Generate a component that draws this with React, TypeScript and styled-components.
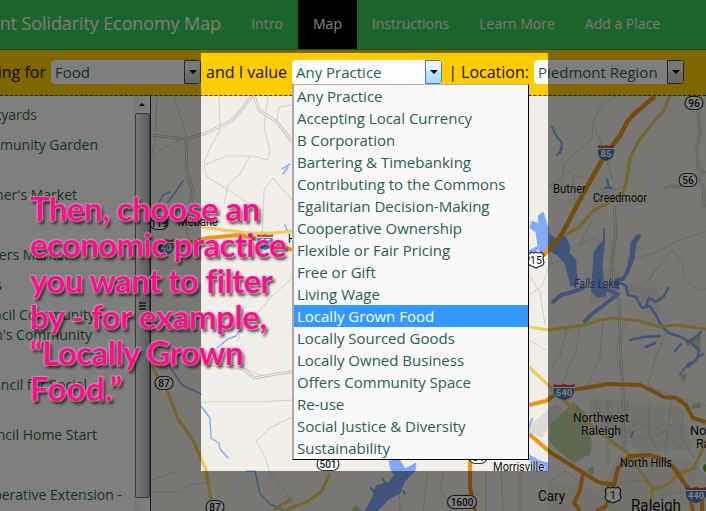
import React from 'react';
import styled, { createGlobalStyle } from 'styled-components';

const GlobalStyle = createGlobalStyle`
  *, *::before, *::after { box-sizing: border-box; }
  html, body { margin: 0; padding: 0; }
  body { font-family: "Open Sans", sans-serif; overflow: hidden; }
`;

const Page = styled.div`
  position: relative;
  display: flex;
  flex-direction: column;
  width: 706px;
  height: 511px;
  overflow: hidden;
  background: #fff;
`;

const NavBar = styled.nav`
  display: flex;
  flex: none;
  height: 50px;
  background: #36ca56;
  border-bottom: 1px solid #2ba545;
`;

const Brand = styled.div`
  display: flex;
  justify-content: flex-end;
  width: 236px;
  padding-right: 15px;
  font-size: 18px;
  line-height: 47px;
  letter-spacing: -0.1px;
  white-space: nowrap;
  color: #fffaf0;
`;

const NavLink = styled.a<{ $width: number; $active?: boolean }>`
  width: ${(p) => p.$width}px;
  flex: none;
  text-align: center;
  font-size: 14px;
  line-height: 47px;
  white-space: nowrap;
  color: ${(p) => (p.$active ? '#fff' : '#f6eee6')};
  background: ${(p) => (p.$active ? '#000' : 'transparent')};
`;

const FilterBar = styled.div`
  display: flex;
  flex: none;
  align-items: flex-start;
  height: 46px;
  padding-top: 10px;
  background: #fc0;
  border-bottom: 1px dashed #333;
`;

const FilterLabel = styled.span<{ $width: number }>`
  display: flex;
  justify-content: flex-end;
  flex: none;
  width: ${(p) => p.$width}px;
  padding-right: 5px;
  font-size: 16px;
  line-height: 24px;
  white-space: nowrap;
  color: #111;
`;

const Select = styled.div`
  display: flex;
  flex: none;
  justify-content: space-between;
  width: 150px;
  height: 24px;
  padding-left: 4px;
  overflow: hidden;
  border-radius: 4px;
  background: #fdfdfd;
  color: #2a5f5a;
  font-size: 15px;
  line-height: 24px;
  white-space: nowrap;
`;

const SelectButton = styled.span<{ $open?: boolean }>`
  display: flex;
  flex: none;
  align-items: center;
  justify-content: center;
  width: 17px;
  height: 24px;
  border: 1px solid ${(p) => (p.$open ? '#3c7fb1' : '#4a4a4a')};
  border-radius: 0 2px 2px 0;
  background: ${(p) =>
    p.$open
      ? 'linear-gradient(#e9f6fd 45%, #bee6fd 50%, #a7d9f5)'
      : 'linear-gradient(#f2f2f2 45%, #ddd 50%, #cfcfcf)'};
`;

const Arrow = styled.i<{ $size: number; $up?: boolean }>`
  border: ${(p) => p.$size}px solid transparent;
  ${(p) => (p.$up ? 'border-top-width: 0; border-bottom-color: #000;' : 'border-bottom-width: 0; border-top-color: #000;')}
`;

const Body = styled.div`
  display: flex;
  flex: 1;
  min-height: 0;
`;

const Sidebar = styled.aside`
  display: flex;
  flex: none;
  width: 151px;
  overflow: hidden;
  border-right: 1px solid #333;
  background: #fff;
`;

const PlaceList = styled.div`
  width: 134px;
  padding-top: 9px;
  overflow: hidden;
`;

const Place = styled.div<{ $end: number; $gap?: number }>`
  display: flex;
  justify-content: flex-end;
  width: ${(p) => p.$end}px;
  margin-top: ${(p) => p.$gap ?? 0}px;
  height: 20px;
  font-size: 14px;
  line-height: 20px;
  white-space: nowrap;
  color: #2a6d3a;
`;

const Scrollbar = styled.div`
  display: flex;
  flex-direction: column;
  align-items: center;
  width: 16px;
  height: 100%;
  background: linear-gradient(90deg, #eee, #fff);
`;

const ScrollUp = styled.div`
  display: flex;
  align-items: center;
  height: 17px;
`;

const Thumb = styled.div`
  display: flex;
  flex-direction: column;
  align-items: center;
  justify-content: center;
  gap: 1px;
  width: 15px;
  height: 385px;
  flex: none;
  border: 1px solid #777;
  border-radius: 2px;
  background: linear-gradient(90deg, #f2f2f2, #d2d2d8 55%, #b4b4be);
`;

const Grip = styled.span`
  width: 7px;
  height: 2px;
  background: #555;
`;

const MapCanvas = styled.svg`
  display: block;
  flex: none;
  width: 555px;
  height: 415px;
`;

const Options = styled.div`
  position: absolute;
  left: 292px;
  top: 84px;
  width: 237px;
  height: 376px;
  border: solid #000;
  border-width: 1px 1px 1px 2px;
  border-color: #b0b0b0 #000 #000 #aaa;
  background: #f8f8f8;
`;

const Option = styled.div<{ $selected?: boolean }>`
  height: 22px;
  padding-left: 3px;
  font-size: 15px;
  line-height: 22px;
  white-space: nowrap;
  color: ${(p) => (p.$selected ? '#fff' : '#2a5f55')};
  background: ${(p) => (p.$selected ? '#39f' : 'transparent')};
`;

const Spotlight = styled.div`
  position: absolute;
  left: 201px;
  top: 53px;
  width: 347px;
  height: 418px;
  box-shadow: 0 0 0 800px rgba(0, 0, 0, 0.5);
`;

const Caption = styled.div`
  position: absolute;
  left: 30px;
  top: 190px;
  font-family: Lato, sans-serif;
  font-weight: 700;
  font-size: 33px;
  line-height: 36px;
  white-space: nowrap;
  color: #f0148c;
  text-shadow: 0 0 2px #ffb6cf, 0 0 2px #ffb6cf, 2px 3px 3px rgba(0, 0, 0, 0.75);
`;

const CaptionLine = styled.div<{ $track: number }>`
  letter-spacing: ${(p) => p.$track}px;
`;

const MinorRoads = () => (
  <g fill="none" stroke="#d2cfc8" strokeWidth="1">
    <path d="M151 350L170 356 201 362M151 492L180 492 192 484 208 483M201 402L262 402 292 400M292 417L270 428 256 441 265 457 270 473 282 488 292 500" />
    <path d="M157 96L155 140 151 157M174 96L187 137 186 170 191 195 184 218 190 245M204 165L226 156 254 156 268 160 270 150 264 128 268 96" />
    <path d="M292 200L273 178 264 190 262 246M204 165L207 177 225 188 247 202 263 211M249 157L240 174 228 185 224 204M219 96L220 130 211 146 204 163" />
    <path d="M292 278L270 298 258 313 246 312 238 340M201 365L246 369 265 377 292 370M292 105L279 107 277 120M187 137L166 146 151 157" />
    <path d="M548 186L564 177 562 165 592 139 593 122 602 105 616 96M593 122L603 149 613 180M592 209L604 192 625 187M563 165L573 175 575 211M575 175L588 179 614 199" />
    <path d="M592 220L579 246 590 238 602 242M640 257L660 251 675 242 706 231M646 282L665 259 673 250 683 264 684 278 698 290 706 289M655 268L650 280M529 275L540 292 545 325M567 329L560 355 550 370M580 326L576 350 562 385M603 323L600 357 587 386M628 320L616 350 624 385M666 333L655 359 648 385 662 392 706 406" />
    <path d="M529 222L548 226 556 250M529 295L542 286 550 264 568 258 580 263M529 340L546 350M595 400L606 422 626 433 638 422 654 431 665 423 684 430M603 445L621 429 646 440 666 431 680 449M608 400L608 467M630 394L622 423 629 455M650 398L648 432 663 461M671 402L665 452 684 477M548 483L565 471 580 482M625 482L650 480 662 495 683 492M694 458L681 437 683 411" />
    <path d="M399 471L400 511M428 471L423 511M444 471L440 489 454 511M486 471L486 511M501 471L503 511M520 471L520 511M151 480L177 471" />
  </g>
);

const WhiteRoads = () => (
  <>
    {['#c4c1ba', '#f4f2ed'].map((color, i) => (
      <g key={color} fill="none" stroke={color} strokeWidth={i ? 1.2 : 3} strokeLinejoin="round">
        <path d="M151 135L186 139 204 134 233 120 252 96M254 96L259 110 277 122 292 142M186 138L187 170 193 190 190 216" />
        <path d="M614 205L616 232 612 260 611 285 619 300 620 340 623 390 624 450" />
        <path d="M692 96L698 112 700 131 697 150 698 168 706 174M698 175L704 190 703 206 706 206M664 188L672 186 682 187" />
        <path d="M226 365L243 369 254 378 276 374 292 372" />
      </g>
    ))}
  </>
);

const Water = () => (
  <g stroke="#83abf5" fill="none" strokeLinejoin="round" strokeLinecap="round">
    <path fill="#83abf5" d="M549 234L557 240 565 236 570 246 569 253 576 260 576 268 578 284 571 286 565 263 557 255 549 250Z" />
    <path fill="#83abf5" d="M593 268L594 252 600 244 605 239 602 264 603 277 606 296 598 297 592 292Z" />
    <path fill="#83abf5" d="M625 275L630 256 631 242 638 234 641 236 636 244 634 258 629 272Z" />
    <path fill="#83abf5" d="M529 251L538 246 536 232 530 228 532 221 539 224 538 216 543 212 546 221 548 229V249L543 253 537 249 534 254Z" />
    <path fill="#83abf5" d="M529 455L540 461 548 463V471H533Z" />
    <path strokeWidth="4" d="M628 271L623 279 616 280 618 288M603 288L618 294 604 305 592 314 585 321M583 288L572 292 561 295 553 302" />
    <path strokeWidth="2.6" d="M618 282L626 286 628 295 636 297 642 308 650 306 657 317 661 326 669 333 681 337 692 344 699 350 697 359 688 367M646 306L649 298 656 302 664 296 668 288M630 340L643 337 660 336M646 347L655 343M688 344L701 332M675 351L681 344M697 358L703 354" />
    <path strokeWidth="2" d="M604 239V229M552 127L557 137 562 143 560 153M557 155L562 149M607 179L609 187 605 188 612 188M633 432L631 437" />
    <path strokeWidth="1.4" d="M159 203L163 195 170 192M168 202L174 194 183 181M283 174L288 167M282 169L290 164M217 348L228 339 236 336 241 328M201 406L210 418 211 438 219 443 220 449 228 458M246 471L255 471 260 494 270 504 283 510M285 225L289 234M170 367L182 385 201 394" />
    <path fill="#83abf5" d="M389 460L391 470 394 475 390 482 376 486 372 499 365 511H377L389 499 400 493 404 482 415 471 416 463 405 469 400 460Z" />
    <path strokeWidth="2" d="M371 488L376 494M382 478L388 488M403 491L405 494M529 427L532 419M680 374L688 364 695 361" />
  </g>
);

const Highways = () => (
  <g fill="none" strokeLinejoin="round">
    <g stroke="#f0cc58" strokeWidth="3.2">
      <path d="M670 96L663 112 650 126 638 142 630 158 627 178 623 195 608 203 593 211 580 226 566 235" />
      <path d="M529 327L549 330 585 325 600 320 612 318 640 321 660 327 675 325 706 329" />
      <path d="M529 367L548 385 566 402 590 425 615 444 630 455 642 474 652 487 652 500M652 489L665 486 680 474 694 468 700 455 706 440" />
      <path d="M151 366L167 390 178 419 193 440 206 470 211 500M285 510L307 502 321 492 330 474M292 499L280 506 274 511" />
      <path d="M201 227L223 230 250 233 275 233 292 231" />
    </g>
    <g stroke="#ea961c" strokeWidth="4">
      <path d="M655 96L633 115 627 122 620 136 605 155 588 185 575 209 562 234 545 254 529 262" strokeWidth="4.6" />
      <path d="M529 405L546 401 560 391 585 388 608 384 640 385 651 390 663 397 676 398 686 405 693 418 706 422" />
      <path d="M529 434L550 452 582 472 598 482 614 485 618 468 630 456 650 455 662 459 672 466 688 488 693 511M583 474L580 490 574 503 580 511M613 494L605 507 596 511M470 460L470 488 475 511M702 498V511" />
      <path d="M151 247L180 245 207 238 240 235 265 241 292 250" />
    </g>
  </g>
);

const Interstate = ({ x, y, n, w = 16 }: { x: number; y: number; n: string; w?: number }) => (
  <g transform={`translate(${x} ${y})`}>
    <path
      d={`M${-w / 2} -5Q${-w / 2 - 2} 6 0 8.5Q${w / 2 + 2} 6 ${w / 2} -5Z`}
      fill="#4378bb"
      stroke="#fff"
      strokeWidth=".6"
    />
    <path d={`M${-w / 2} -8Q${-w / 4} -6 0 -8Q${w / 4} -6 ${w / 2} -8V-5H${-w / 2}Z`} fill="#d6444a" />
    <path d={`M${-w / 2} -4.5H${w / 2}`} stroke="#fff" />
    <text y="4.2" textAnchor="middle" fontSize="9.5" fontWeight="700" fill="#fff">{n}</text>
  </g>
);

const StateRoute = ({ x, y, n, w = 18 }: { x: number; y: number; n: string; w?: number }) => (
  <g transform={`translate(${x} ${y})`}>
    <rect x={-w / 2} y="-6.5" width={w} height="13" rx="6.5" fill="#fff" stroke="#333" strokeWidth="1.2" />
    <text y="3.5" textAnchor="middle" fontSize="10" fontWeight="500" fill="#111">{n}</text>
  </g>
);

const UsRoute = ({ x, y, n }: { x: number; y: number; n: string }) => (
  <g transform={`translate(${x} ${y})`}>
    <path
      d="M-5 -8Q-2.500 -6 0 -8Q2.500 -6 5 -8L8 -5Q6 -1 8 2Q7.500 6 3 6.500L0 8L-3 6.500Q-7.500 6 -8 2Q-6 -1 -8 -5Z"
      fill="#fff"
      stroke="#222"
      strokeWidth="1.2"
    />
    <text y="4" textAnchor="middle" fontSize="10.5" fill="#111">{n}</text>
  </g>
);

const townLabels = [
  { text: 'Butner', x: 553, y: 193, size: 12, length: 33 },
  { text: 'Creedmoor', x: 593, y: 202, size: 12, length: 54 },
  { text: 'Mebane', x: 178, y: 226, size: 12, length: 40 },
  { text: 'Northwest', x: 573, y: 422, size: 12.5, length: 56 },
  { text: 'Raleigh', x: 581, y: 435, size: 12.5, length: 40 },
  { text: 'North Hills', x: 620, y: 467, size: 12, length: 52 },
  { text: 'Cary', x: 538, y: 501, size: 14, length: 27 },
  { text: 'Raleigh', x: 631, y: 511, size: 17, length: 50 },
  { text: 'Morrisville', x: 493, y: 471, size: 12, length: 51 },
  { text: 'North', x: 690, y: 435, size: 12.5, length: 32 },
  { text: 'Raleigh', x: 696, y: 448, size: 12.5, length: 40 },
  { text: 'H', x: 288, y: 243, size: 12, length: 8 },
];

const RegionMap = () => (
  <MapCanvas viewBox="151 96 555 415" fontFamily="Roboto, sans-serif">
    <rect x="151" y="96" width="555" height="415" fill="#f2efe9" />
    <path fill="#e9e4dc" d="M600 270H620L617 296 606 300 588 305ZM626 285L655 280 664 310 650 315ZM548 480L600 490 620 455 690 460 706 475V511H548ZM590 398L680 406 694 450 640 452 590 420Z" />
    <path fill="#dddbd5" d="M529 426L555 404 563 409 541 438 529 432Z" />
    <path fill="#bbd3a1" d="M560 415L574 402 585 413 592 443 590 454 574 463 558 451 548 440 550 424ZM683 341L701 334 700 352 692 346ZM691 405L700 402 701 408 692 409ZM587 470L594 466 593 476ZM355 505L363 511H351ZM680 375L687 373 684 382Z" />
    <MinorRoads />
    <WhiteRoads />
    <Water />
    <Highways />
    <Interstate x={606} y={153} n="85" />
    <Interstate x={564} y={392} n="540" w={21} />
    <Interstate x={696} y={495} n="440" w={21} />
    <Interstate x={166} y={247} n="40" />
    <Interstate x={265} y={242} n="85" />
    <StateRoute x={694} y={103} n="96" />
    <StateRoute x={688} y={180} n="56" />
    <StateRoute x={159} y={223} n="119" />
    <StateRoute x={164} y={383} n="87" />
    <StateRoute x={215} y={507} n="87" />
    <StateRoute x={328} y={464} n="501" w={22} />
    <StateRoute x={478} y={457} n="54" />
    <StateRoute x={462} y={502} n="1600" w={29} />
    <UsRoute x={536} y={260} n="15" />
    <UsRoute x={613} y={495} n="1" />
    <circle cx="706" cy="468" r="6" fill="#fff" />
    <circle cx="707" cy="468" r="4" fill="#5da114" />
    <text x="574" y="288" fontSize="12.5" fontStyle="italic" fill="#315b91" textLength="45" lengthAdjust="spacingAndGlyphs">
      Falls Lake
    </text>
    <g fill="#111" stroke="#f2efe9" strokeWidth="1.500" strokeOpacity=".5" paintOrder="stroke">
      {townLabels.map((t) => (
        <text key={t.text + t.x} x={t.x} y={t.y} fontSize={t.size} textLength={t.length} lengthAdjust="spacingAndGlyphs">
          {t.text}
        </text>
      ))}
    </g>
  </MapCanvas>
);

const places = [
  { name: 'Backyards', end: 37, gap: 0 },
  { name: 'Community Garden', end: 98, gap: 10 },
  { name: "Farmer's Market", end: 77, gap: 30 },
  { name: 'Farmers Market', end: 69, gap: 40 },
  { name: 'Gardens', end: 2, gap: 10 },
  { name: 'Council Community', end: 95, gap: 10 },
  { name: "Children's Community", end: 92, gap: 0 },
  { name: 'Council for Social', end: 87, gap: 30 },
  { name: 'Council Home Start', end: 97, gap: 30 },
  { name: 'Cooperative Extension -', end: 122, gap: 40 },
];

const practices = [
  'Any Practice',
  'Accepting Local Currency',
  'B Corporation',
  'Bartering & Timebanking',
  'Contributing to the Commons',
  'Egalitarian Decision-Making',
  'Cooperative Ownership',
  'Flexible or Fair Pricing',
  'Free or Gift',
  'Living Wage',
  'Locally Grown Food',
  'Locally Sourced Goods',
  'Locally Owned Business',
  'Offers Community Space',
  'Re-use',
  'Social Justice & Diversity',
  'Sustainability',
];

const captionLines = [
  { text: 'Then, choose an', track: -0.55 },
  { text: 'economic practice', track: -0.65 },
  { text: 'you want to filter', track: -0.6 },
  { text: 'by - for example,', track: -0.45 },
  { text: '“Locally Grown', track: -0.57 },
  { text: 'Food.”', track: 0.3 },
];

const Dropdown = ({ value, open }: { value: string; open?: boolean }) => (
  <Select>
    {value}
    <SelectButton $open={open}>
      <Arrow $size={4} />
    </SelectButton>
  </Select>
);

export default function App() {
  return (
    <Page>
      <GlobalStyle />
      <NavBar>
        <Brand>Piedmont Solidarity Economy Map</Brand>
        <NavLink $width={62}>Intro</NavLink>
        <NavLink $width={59} $active>Map</NavLink>
        <NavLink $width={107}>Instructions</NavLink>
        <NavLink $width={106}>Learn More</NavLink>
        <NavLink $width={105}>Add a Place</NavLink>
      </NavBar>
      <FilterBar>
        <FilterLabel $width={51}>I'm looking for</FilterLabel>
        <Dropdown value="Food" />
        <FilterLabel $width={91}>and I value</FilterLabel>
        <Dropdown value="Any Practice" open />
        <FilterLabel $width={92}>| Location:</FilterLabel>
        <Dropdown value="Piedmont Region" />
      </FilterBar>
      <Body>
        <Sidebar>
          <PlaceList>
            {places.map((p) => (
              <Place key={p.name} $end={p.end} $gap={p.gap}>{p.name}</Place>
            ))}
          </PlaceList>
          <Scrollbar>
            <ScrollUp><Arrow $size={3} $up /></ScrollUp>
            <Thumb><Grip /><Grip /><Grip /></Thumb>
          </Scrollbar>
        </Sidebar>
        <RegionMap />
      </Body>
      <Options>
        {practices.map((p) => (
          <Option key={p} $selected={p === 'Locally Grown Food'}>{p}</Option>
        ))}
      </Options>
      <Spotlight />
      <Caption>
        {captionLines.map((l) => (
          <CaptionLine key={l.text} $track={l.track}>{l.text}</CaptionLine>
        ))}
      </Caption>
    </Page>
  );
}
